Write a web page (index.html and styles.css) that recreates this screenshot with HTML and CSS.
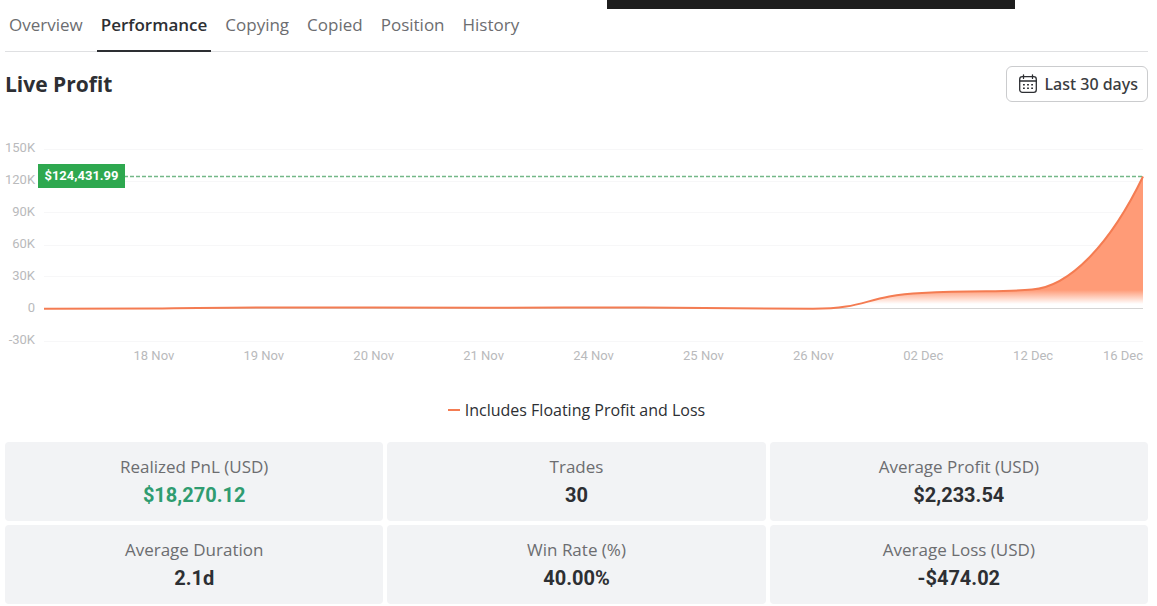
FILE: index.html
```html
<!DOCTYPE html>
<html lang="en">
<head>
<meta charset="utf-8">
<title>Performance</title>
<link rel="stylesheet" href="styles.css">
</head>
<body>
<div class="overlay-bar"></div>
<main class="page">
  <nav class="tabs">
    <a class="tab" href="#overview">Overview</a>
    <a class="tab tab-active" href="#performance" aria-current="page">Performance</a>
    <a class="tab" href="#copying">Copying</a>
    <a class="tab" href="#copied">Copied</a>
    <a class="tab" href="#position">Position</a>
    <a class="tab" href="#history">History</a>
  </nav>

  <header class="section-head">
    <h1 class="section-title">Live Profit</h1>
    <button class="range-button" type="button">
      <svg class="calendar" viewBox="0 0 20 20" aria-hidden="true">
        <rect x="1.7" y="2.7" width="16.6" height="15.6" rx="2.6"/>
        <path d="M1.7 7H18.3M5.5 0.8V4.4M14.5 0.8V4.4"/>
        <path class="calendar-dots" d="M5 10.7h1.8M9.1 10.7h1.8M13.2 10.7H15M5 14.3h1.8M9.1 14.3h1.8M13.2 14.3H15"/>
      </svg>
      <span>Last 30 days</span>
    </button>
  </header>

  <section class="chart" aria-label="Live profit">
    <div class="y-axis">
      <span>150K</span><span>120K</span><span>90K</span><span>60K</span><span>30K</span><span>0</span><span>-30K</span>
    </div>
    <div class="plot">
      <svg class="plot-svg" viewBox="0 0 1099 192" preserveAspectRatio="none" aria-hidden="true">
        <defs>
          <linearGradient id="area" gradientUnits="userSpaceOnUse" x1="0" y1="141" x2="0" y2="155">
            <stop offset="0" stop-color="#ff9b77"/>
            <stop offset="1" stop-color="#ff9b77" stop-opacity="0"/>
          </linearGradient>
        </defs>
        <path class="grid-line" d="M0 .5H1099M0 32.5H1099M0 63.5H1099M0 96.5H1099M0 127.5H1099M0 192.5H1099"/>
        <path class="zero-line" d="M0 159.5H1099"/>
        <path fill="url(#area)" d="M769 159.8C824 159.8 820 147 878 144C932 141 960 143.500 988 140.500C1025 138 1066 96 1099 27.500V159.500H769Z"/>
        <path class="current-line" d="M80 27.500H1099"/>
        <path class="profit-line" d="M0 159.800C40 159.800 80 159.600 110 159.500C150 159 180 158.500 220 158.500C280 158.300 380 158.800 440 158.700C500 158.700 540 158.300 600 158.500C660 158.800 720 159.800 769 159.800C824 159.800 820 147 878 144C932 141 960 143.500 988 140.500C1025 138 1066 96 1099 27.500"/>
      </svg>
      <span class="current-tag">$124,431.99</span>
    </div>
    <div class="x-axis">
      <span>18 Nov</span><span>19 Nov</span><span>20 Nov</span><span>21 Nov</span><span>24 Nov</span><span>25 Nov</span><span>26 Nov</span><span>02 Dec</span><span>12 Dec</span><span>16 Dec</span>
    </div>
  </section>

  <p class="legend"><span class="legend-mark"></span>Includes Floating Profit and Loss</p>

  <dl class="stats">
    <div class="stat"><dt>Realized PnL (USD)</dt><dd class="gain">$18,270.12</dd></div>
    <div class="stat"><dt>Trades</dt><dd>30</dd></div>
    <div class="stat"><dt>Average Profit (USD)</dt><dd>$2,233.54</dd></div>
    <div class="stat"><dt>Average Duration</dt><dd>2.1d</dd></div>
    <div class="stat"><dt>Win Rate (%)</dt><dd>40.00%</dd></div>
    <div class="stat"><dt>Average Loss (USD)</dt><dd>-$474.02</dd></div>
  </dl>
</main>
</body>
</html>
```
FILE: styles.css
```css
* { box-sizing: border-box; }
body {
  margin: 0;
  background: #fff;
  color: #2d2f33;
  font-family: "Open Sans", "Noto Sans", sans-serif;
}
.overlay-bar {
  position: absolute;
  top: 0;
  left: 52.5%;
  width: 35.2%;
  height: 9px;
  background: #1e1e1e;
}
.page { padding: 0 9px 2px 5px; }

.tabs {
  display: flex;
  gap: 10px;
  height: 52px;
  border-bottom: 1px solid #dfe0e2;
}
.tab {
  height: 52px;
  padding: 0 4px;
  font-size: 17px;
  font-weight: 400;
  line-height: 50px;
  color: #6c6d70;
  text-decoration: none;
}
.tab-active {
  font-weight: 600;
  color: #2d2f33;
  border-bottom: 2px solid #2d2f33;
}

.section-head {
  display: flex;
  align-items: center;
  justify-content: space-between;
  padding-top: 14px;
}
.section-title {
  margin: 0;
  font-size: 21px;
  font-weight: 700;
  line-height: 36px;
}
.range-button {
  display: flex;
  align-items: center;
  gap: 6px;
  height: 36px;
  padding: 0 9px 0 11px;
  border: 1px solid #cbccce;
  border-radius: 6px;
  background: #fff;
  color: #3a3c40;
  font: 500 16px "Noto Sans", sans-serif;
}
.calendar {
  width: 20px;
  height: 20px;
  fill: none;
  stroke: #2d2f33;
  stroke-width: 1.3;
  stroke-linecap: round;
}
.calendar-dots { stroke-linecap: butt; stroke-width: 1.6; }

.chart {
  display: grid;
  grid-template-columns: 30px 1fr;
  column-gap: 9px;
  padding: 47px 5px 0 0;
  font-family: Roboto, sans-serif;
  font-size: 13px;
  color: #b9babc;
}
.y-axis {
  display: flex;
  flex-direction: column;
  justify-content: space-between;
  height: 208px;
  margin: -9px 0 -7px;
  line-height: 16px;
  text-align: right;
}
.plot { position: relative; height: 192px; }
.plot-svg {
  display: block;
  width: 100%;
  height: 192px;
  overflow: visible;
}
.plot-svg path { vector-effect: non-scaling-stroke; }
.grid-line { fill: none; stroke: #f7f7f8; }
.zero-line { fill: none; stroke: #d4d4d4; }
.current-line {
  stroke: #73b888;
  stroke-width: 1.5;
  stroke-dasharray: 4 2;
}
.profit-line {
  fill: none;
  stroke: #f47c52;
  stroke-width: 2;
}
.current-tag {
  position: absolute;
  top: 15px;
  left: -6px;
  width: 87px;
  background: #2ea84f;
  color: #fff;
  font-weight: 700;
  line-height: 24px;
  text-align: center;
}
.x-axis {
  grid-column: 2;
  display: flex;
  padding-top: 7px;
  line-height: 16px;
  text-align: center;
}
.x-axis::before { content: ""; flex: 1 1 0; }
.x-axis span { flex: 2 1 0; }
.x-axis span:last-child { flex: 1 1 0; text-align: right; }

.legend {
  display: flex;
  align-items: center;
  justify-content: center;
  gap: 5px;
  margin: 36px 0 22px;
  font-size: 16px;
  line-height: 20px;
}
.legend-mark {
  width: 12px;
  height: 2px;
  background: #f47c52;
}

.stats {
  display: grid;
  grid-template-columns: repeat(3, 1fr);
  gap: 4px;
  margin: 0;
}
.stat {
  height: 79px;
  padding-top: 12px;
  border-radius: 4px;
  background: #f2f3f5;
  text-align: center;
}
.stat dt {
  font-size: 17px;
  line-height: 26px;
  color: #6c6d70;
}
.stat dd {
  margin: 0;
  font-family: Roboto, sans-serif;
  font-size: 20px;
  font-weight: 700;
  line-height: 30px;
}
.stat .gain { color: #2f9c70; }
```
